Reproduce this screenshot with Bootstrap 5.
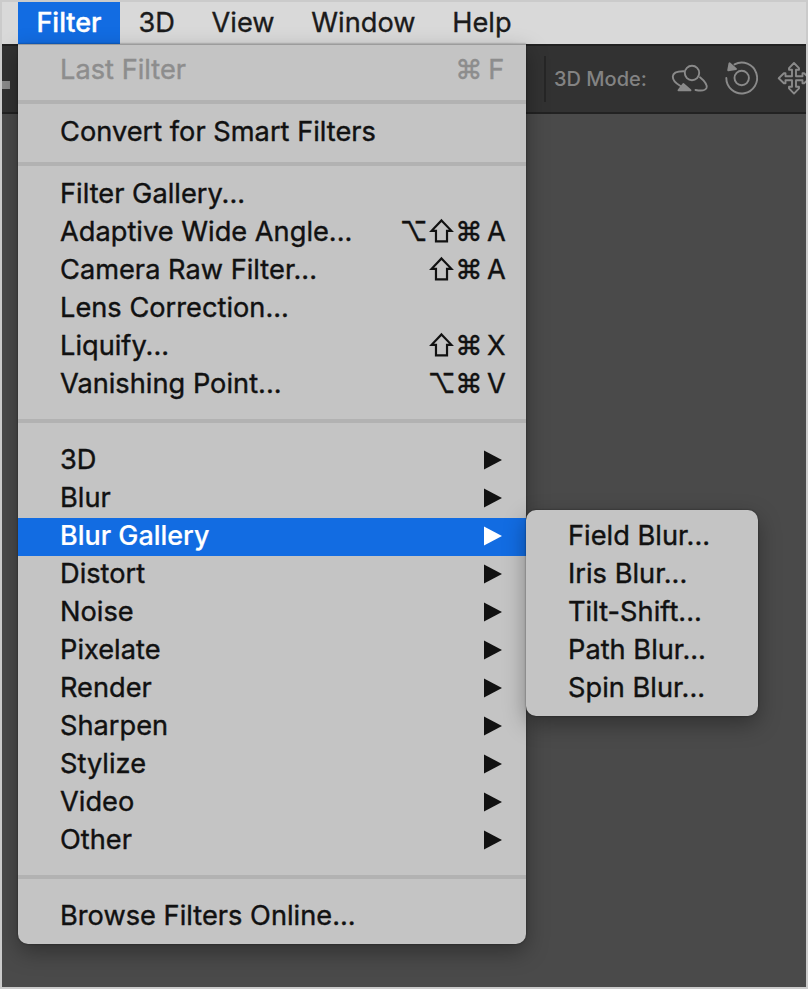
<!DOCTYPE html>
<html lang="en">
<head>
<meta charset="utf-8">
<meta name="viewport" content="width=device-width, initial-scale=1">
<title>Filter menu</title>
<link rel="stylesheet" href="https://cdn.jsdelivr.net/npm/bootstrap@5.3.0/dist/css/bootstrap.min.css">
<style>
  body { font-family: Inter, sans-serif; font-size: 27.2px; color: #111; }
  .window-frame { width: 808px; height: 989px; border: 2px solid #cbcbcb; background: #4a4a4a; }
  .menu-bar { height: 42px; background: #d9d9d9; padding-left: 16px; }
  .menu-bar .nav-link { color: #1b1b1b; padding: 0 18.4px; line-height: 41px; height: 42px; -webkit-text-stroke: .35px currentColor; }
  .menu-bar .nav-link.active { background: #126ce2; color: #fff; font-weight: 500; padding: 0; width: 102px; text-align: center; font-size: 27px; }
  .options-bar { height: 70px; background: #323232; border-top: 2px solid #222; border-bottom: 2px solid #222; }
  .mode-group { width: 124px; margin-left: 542px; color: #838383; font-size: 20px; font-weight: 500; white-space: nowrap; }
  .mode-label { padding-bottom: 1px; }
  .mode-rule { width: 2px; height: 46px; background: #262626; }
  .tool-stub { width: 8px; height: 8px; background: #8b8b8b; top: 35px; left: 0; }
  .menu-panel { background: #c4c4c4; border-radius: 0 0 10px 10px; padding: 8px 0; box-shadow: 0 8px 22px rgba(0,0,0,.34), 0 0 2px rgba(0,0,0,.5); }
  .menu-main { left: 16px; top: 42px; width: 508px; border-top: 1px solid #9c9c9c; padding-top: 7px; }
  .menu-sub { left: 524px; top: 508px; width: 232px; border-radius: 10px; }
  .menu-row { height: 38px; line-height: 35px; padding: 0 16px 3px 42px; white-space: nowrap; letter-spacing: .02px; -webkit-text-stroke: .4px currentColor; }
  .menu-row.current { background: #126ce2; color: #fff; font-weight: 500; font-size: 26.9px; -webkit-text-stroke: .2px currentColor; }
  .menu-row.off { color: #8d8d8d; }
  .menu-rule { height: 4px; background: #b2b2b2; margin: 10px 0; }
  .menu-rule.wide { margin: 15px 0 19px; }
  .arrow { width: 18px; height: 20px; margin: 1px 8px 0 0; fill: currentColor; }
  .keys { font-family: Inter, "DejaVu Sans", sans-serif; }
  .keys span { display: inline-block; width: 27.4px; text-align: center; }
  .shift { width: 25px; height: 25px; margin: 0 1px 0 2px; vertical-align: -2px; fill: none; stroke: currentColor; stroke-width: 2.1; }
</style>
<script src="https://cdn.jsdelivr.net/npm/bootstrap@5.3.0/dist/js/bootstrap.bundle.min.js"></script>
</head>
<body>
<svg class="d-none">
  <symbol id="tri" viewBox="0 0 18 20"><path d="M0 .5 18 10 0 19.5z"/></symbol>
  <symbol id="shift" viewBox="0 0 24 24"><path d="M12 2.3 21.5 12.3H17.3V22.5H6.7V12.3H2.5z"/></symbol>
</svg>
<div class="window-frame position-relative overflow-hidden">
  <nav class="menu-bar nav flex-nowrap">
    <a class="nav-link active"><span>Filter</span></a>
    <a class="nav-link"><span>3D</span></a>
    <a class="nav-link"><span>View</span></a>
    <a class="nav-link"><span>Window</span></a>
    <a class="nav-link"><span>Help</span></a>
  </nav>
  <div class="options-bar position-relative overflow-hidden">
    <div class="tool-stub position-absolute"></div>
    <div class="d-flex align-items-center h-100">
      <div class="mode-group d-flex align-items-center flex-shrink-0">
        <div class="mode-rule me-2"></div>
        <span class="mode-label">3D Mode:</span>
      </div>
      <svg class="flex-shrink-0" width="146" height="48" viewBox="0 0 146 48" fill="none" stroke="#8a8a8a" stroke-width="1.9" stroke-linecap="round" stroke-linejoin="round">
        <circle cx="24" cy="18" r="7.2"/>
        <path d="M15.8 16.3C10 16.2 5 17.8 4.8 21.5 4.7 25 8 28.5 12.5 31"/>
        <path d="M32 22.3C36.5 26 39.5 30 38.5 33 37.5 35.5 33 36 27.5 35"/>
        <path d="M10.5 35.3 15.3 29 22.5 35.3z" fill="#8a8a8a"/>
        <circle cx="73.7" cy="23" r="7.2"/>
        <path d="M58.3 23A15.4 15.4 0 1 0 66.5 9.4"/>
        <path d="M61.5 8.3 60.2 15.2 68 14z" fill="#8a8a8a"/>
        <path d="M126 8 131 13.2V14.8H128V21.3H134.5V18.3H136.1L141.3 23.3 136.1 28.3H134.5V25.3H128V31.8H131V33.4L126 38.6 121 33.4V31.8H124V25.3H117.5V28.3H115.9L110.7 23.3 115.9 18.3H117.5V21.3H124V14.8H121V13.2z"/>
      </svg>
    </div>
  </div>

  <div class="menu-panel menu-main position-absolute">
    <div class="menu-row off d-flex justify-content-between"><span>Last Filter</span><span class="keys"><span>⌘</span><span>F</span></span></div>
    <div class="menu-rule"></div>
    <div class="menu-row"><span>Convert for Smart Filters</span></div>
    <div class="menu-rule"></div>
    <div class="menu-row"><span>Filter Gallery...</span></div>
    <div class="menu-row d-flex justify-content-between"><span>Adaptive Wide Angle...</span><span class="keys"><span>⌥</span><svg class="shift" aria-label="Shift"><use href="#shift"/></svg><span>⌘</span><span>A</span></span></div>
    <div class="menu-row d-flex justify-content-between"><span>Camera Raw Filter...</span><span class="keys"><svg class="shift" aria-label="Shift"><use href="#shift"/></svg><span>⌘</span><span>A</span></span></div>
    <div class="menu-row"><span>Lens Correction...</span></div>
    <div class="menu-row d-flex justify-content-between"><span>Liquify...</span><span class="keys"><svg class="shift" aria-label="Shift"><use href="#shift"/></svg><span>⌘</span><span>X</span></span></div>
    <div class="menu-row d-flex justify-content-between"><span>Vanishing Point...</span><span class="keys"><span>⌥</span><span>⌘</span><span>V</span></span></div>
    <div class="menu-rule wide"></div>
    <div class="menu-row d-flex align-items-center justify-content-between"><span>3D</span><svg class="arrow"><use href="#tri"/></svg></div>
    <div class="menu-row d-flex align-items-center justify-content-between"><span>Blur</span><svg class="arrow"><use href="#tri"/></svg></div>
    <div class="menu-row current d-flex align-items-center justify-content-between"><span>Blur Gallery</span><svg class="arrow"><use href="#tri"/></svg></div>
    <div class="menu-row d-flex align-items-center justify-content-between"><span>Distort</span><svg class="arrow"><use href="#tri"/></svg></div>
    <div class="menu-row d-flex align-items-center justify-content-between"><span>Noise</span><svg class="arrow"><use href="#tri"/></svg></div>
    <div class="menu-row d-flex align-items-center justify-content-between"><span>Pixelate</span><svg class="arrow"><use href="#tri"/></svg></div>
    <div class="menu-row d-flex align-items-center justify-content-between"><span>Render</span><svg class="arrow"><use href="#tri"/></svg></div>
    <div class="menu-row d-flex align-items-center justify-content-between"><span>Sharpen</span><svg class="arrow"><use href="#tri"/></svg></div>
    <div class="menu-row d-flex align-items-center justify-content-between"><span>Stylize</span><svg class="arrow"><use href="#tri"/></svg></div>
    <div class="menu-row d-flex align-items-center justify-content-between"><span>Video</span><svg class="arrow"><use href="#tri"/></svg></div>
    <div class="menu-row d-flex align-items-center justify-content-between"><span>Other</span><svg class="arrow"><use href="#tri"/></svg></div>
    <div class="menu-rule wide"></div>
    <div class="menu-row"><span>Browse Filters Online...</span></div>
  </div>

  <div class="menu-panel menu-sub position-absolute">
    <div class="menu-row"><span>Field Blur...</span></div>
    <div class="menu-row"><span>Iris Blur...</span></div>
    <div class="menu-row"><span>Tilt-Shift...</span></div>
    <div class="menu-row"><span>Path Blur...</span></div>
    <div class="menu-row"><span>Spin Blur...</span></div>
  </div>
</div>
</body>
</html>
